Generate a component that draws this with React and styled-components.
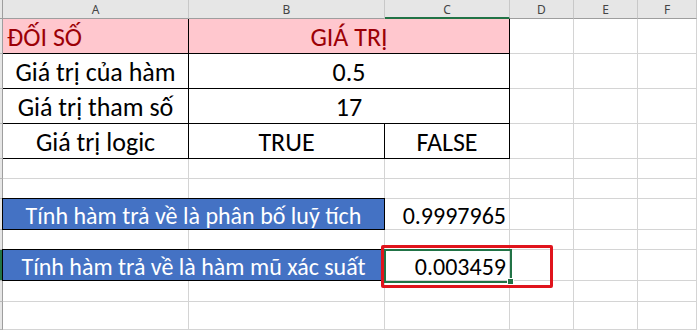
import React from "react";
import styled, { createGlobalStyle } from "styled-components";

const Global = createGlobalStyle`
  html, body { margin: 0; padding: 0; background: #fff; }
  body { width: 697px; height: 330px; overflow: hidden; }
`;

const Sheet = styled.div`
  position: relative;
  width: 697px;
  height: 330px;
  display: grid;
  grid-template-columns: 3px 186px 196px 125px 64px 64px 1fr;
  grid-template-rows: 19px 35px 35px 35px 35px 20px 20px 31px 20px 31px 21px 1fr;
  font-family: Carlito, Lato, "Noto Sans", sans-serif;
  overflow: hidden;
`;

const Corner = styled.div`
  grid-column: 1;
  grid-row: 1;
  background: #e6e6e6;
  border-right: 1px solid #9e9e9e;
  border-bottom: 1px solid #9e9e9e;
  box-sizing: border-box;
`;

const ColHead = styled.div`
  grid-row: 1;
  grid-column: ${(p) => p.$col};
  background: #e6e6e6;
  box-sizing: border-box;
  border-right: 1px solid #c8c8c8;
  border-bottom: ${(p) => (p.$active ? "2px solid #217346" : "1px solid #9e9e9e")};
  display: flex;
  align-items: center;
  justify-content: center;
  font-family: "Noto Sans", sans-serif;
  font-size: 12px;
  color: #444;
  padding-top: ${(p) => (p.$active ? "1px" : "0")};
`;

const RowHead = styled.div`
  grid-column: 1;
  grid-row: ${(p) => p.$row};
  background: #e6e6e6;
  box-sizing: border-box;
  border-bottom: 1px solid #b8b8b8;
  border-right: 1px solid #9e9e9e;
  box-shadow: ${(p) => (p.$active ? "inset -2px 0 0 #217346" : "none")};
`;

const Cell = styled.div`
  grid-column: ${(p) => p.$col};
  grid-row: ${(p) => p.$row};
  box-sizing: border-box;
  border-right: 1px solid #d4d4d4;
  border-bottom: 1px solid #d4d4d4;
  background: #fff;
`;

const DataCell = styled.div`
  grid-column: ${(p) => p.$col};
  grid-row: ${(p) => p.$row};
  box-sizing: border-box;
  display: flex;
  align-items: center;
  justify-content: ${(p) => p.$align || "center"};
  padding: 1px ${(p) => (p.$align === "flex-start" ? "4px" : "0")} 0;
  font-size: 26px;
  white-space: nowrap;
  overflow: hidden;
  color: #000;
  background: #fff;
  border-right: 1px solid #000;
  border-bottom: 1px solid #000;
`;

const HeadCell = styled(DataCell)`
  background: #ffc7ce;
  color: #9c0006;
`;

const ValueCell = styled.div`
  grid-column: 4;
  grid-row: ${(p) => p.$row};
  display: flex;
  align-items: center;
  justify-content: flex-end;
  padding: 2px 4px 0 0;
  font-size: 24px;
  color: #000;
  white-space: nowrap;
`;

const BlueCell = styled.div`
  grid-column: 2 / 4;
  grid-row: ${(p) => p.$row};
  margin: -1px 0 0 -1px;
  box-sizing: border-box;
  background: #4472c4;
  border: 1px solid #000;
  color: #fff;
  display: flex;
  align-items: center;
  justify-content: center;
  padding-top: 2px;
  font-size: 24px;
  white-space: nowrap;
  overflow: hidden;
`;

const Selection = styled.div`
  position: absolute;
  left: 384px;
  top: 249px;
  width: 128px;
  height: 34px;
  box-sizing: border-box;
  border: 2px solid #217346;
  pointer-events: none;
`;

const Handle = styled.div`
  position: absolute;
  left: 507px;
  top: 278px;
  width: 7px;
  height: 7px;
  box-sizing: border-box;
  background: #217346;
  border: 1px solid #fff;
`;

const Highlight = styled.div`
  position: absolute;
  left: 381px;
  top: 245px;
  width: 172px;
  height: 43px;
  box-sizing: border-box;
  border: 3px solid #e0141c;
  border-radius: 2px;
  pointer-events: none;
`;

const cols = ["A", "B", "C", "D", "E", "F"];

export default function App() {
  const grid = [];
  for (let r = 2; r <= 12; r++) {
    grid.push(<RowHead key={"rh" + r} $row={r} $active={r === 10} />);
    for (let c = 2; c <= 7; c++) {
      grid.push(<Cell key={r + "-" + c} $row={r} $col={c} />);
    }
  }
  return (
    <>
      <Global />
      <Sheet>
        <Corner />
        {cols.map((l, i) => (
          <ColHead key={l} $col={i + 2} $active={l === "C"}>
            {l}
          </ColHead>
        ))}
        {grid}

        <HeadCell $col={2} $row={2} $align="flex-start">ĐỐI SỐ</HeadCell>
        <HeadCell $col="3 / 5" $row={2}>GIÁ TRỊ</HeadCell>

        <DataCell $col={2} $row={3}>Giá trị của hàm</DataCell>
        <DataCell $col="3 / 5" $row={3}>0.5</DataCell>

        <DataCell $col={2} $row={4}>Giá trị tham số</DataCell>
        <DataCell $col="3 / 5" $row={4}>17</DataCell>

        <DataCell $col={2} $row={5}>Giá trị logic</DataCell>
        <DataCell $col={3} $row={5}>TRUE</DataCell>
        <DataCell $col={4} $row={5}>FALSE</DataCell>

        <BlueCell $row={8}>Tính hàm trả về là phân bố luỹ tích</BlueCell>
        <ValueCell $row={8}>0.9997965</ValueCell>

        <BlueCell $row={10}>Tính hàm trả về là hàm mũ xác suất</BlueCell>
        <ValueCell $row={10}>0.003459</ValueCell>

        <Selection />
        <Handle />
        <Highlight />
      </Sheet>
    </>
  );
}
